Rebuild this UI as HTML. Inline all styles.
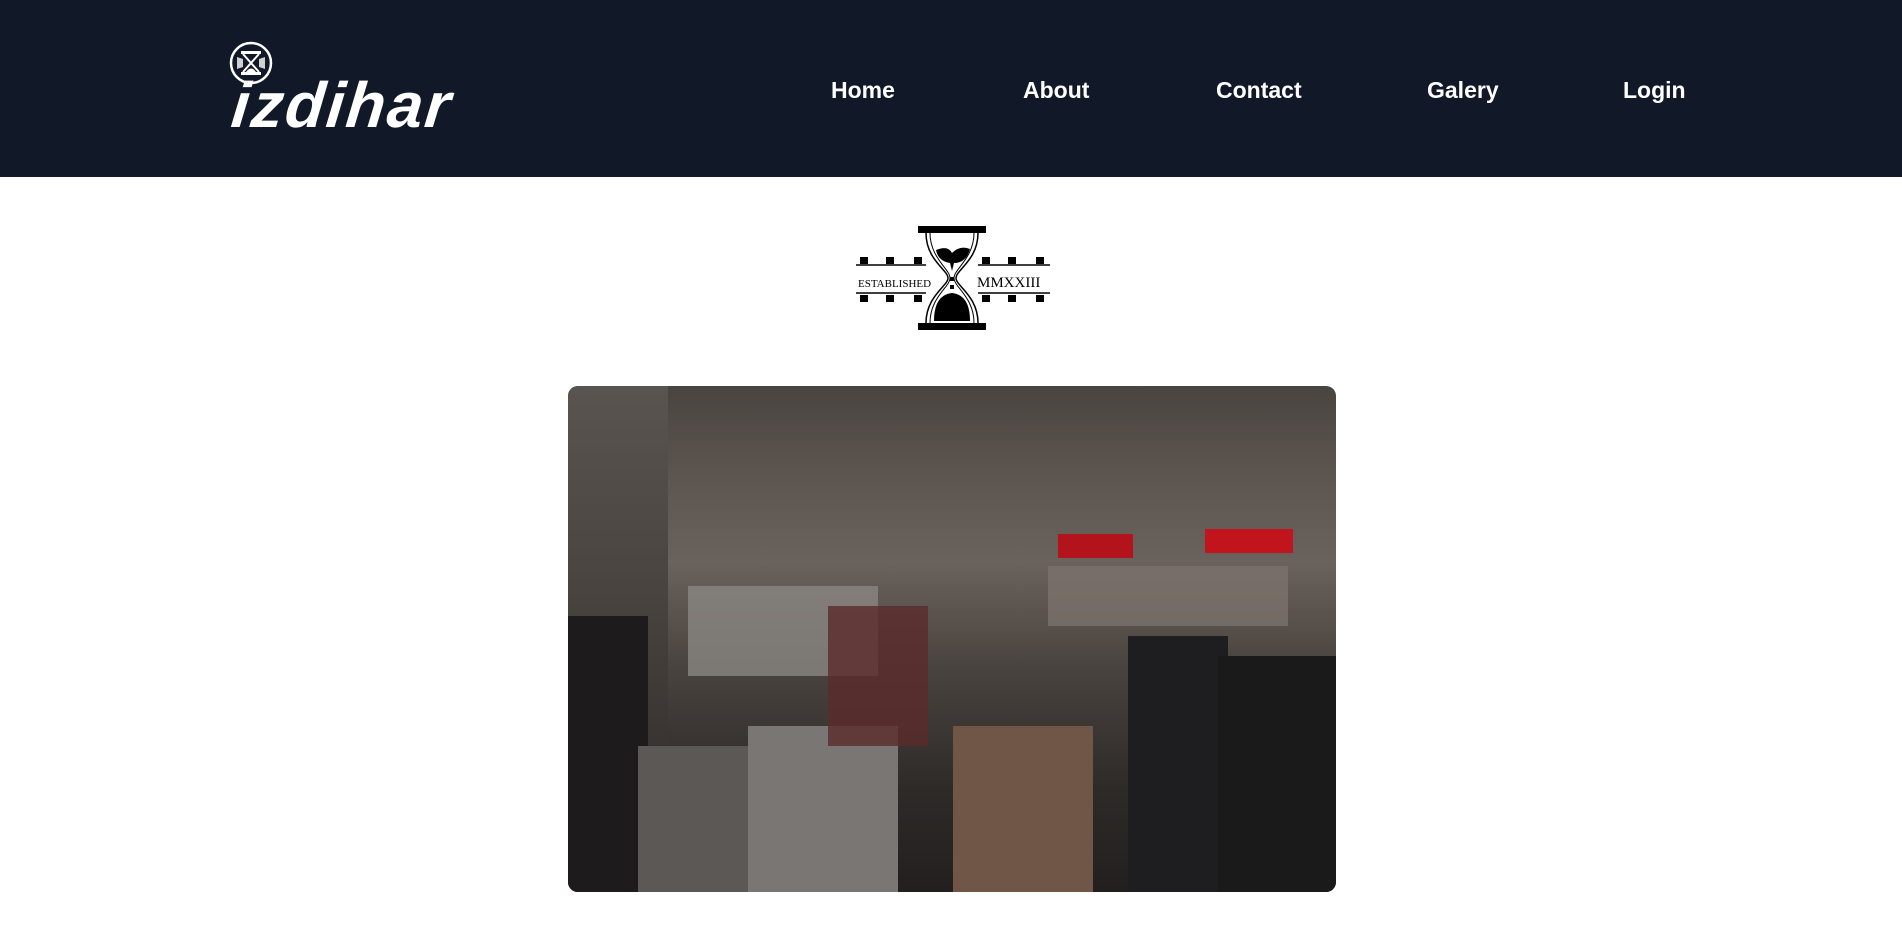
<!DOCTYPE html>
<html><head><meta charset="utf-8"><style>
*{margin:0;padding:0;box-sizing:border-box}
body{width:1902px;height:925px;background:#fff;font-family:"Liberation Sans",sans-serif;overflow:hidden;position:relative}
header{position:absolute;left:0;top:0;width:1902px;height:177px;background:#111827}
.nav a{position:absolute;top:77px;color:#fff;font-size:23px;font-weight:bold;text-decoration:none}
.logo{position:absolute;left:232px;top:68px;color:#fff;font-size:64px;font-weight:bold;font-style:italic;letter-spacing:2px;transform:skewX(-6deg)}
.photo{position:absolute;left:568px;top:386px;width:768px;height:506px;border-radius:10px;overflow:hidden;
background:linear-gradient(180deg,#4a4440 0%,#5e5752 20%,#6a625c 35%,#4a4440 55%,#2e2a28 80%,#221f1e 100%)}
.photo div{position:absolute}
</style></head><body>
<header>
<svg style="position:absolute;left:229px;top:41px" width="44" height="44" viewBox="0 0 44 44">
<circle cx="22" cy="22" r="20" fill="none" stroke="#fff" stroke-width="2.5"/>
<rect x="12" y="10" width="20" height="3" fill="#fff"/><rect x="12" y="31" width="20" height="3" fill="#fff"/>
<path d="M14 13 L22 22 L14 31 M30 13 L22 22 L30 31" stroke="#fff" stroke-width="2" fill="none"/>
<path d="M8 16 L14 18 L14 26 L8 28Z M36 16 L30 18 L30 26 L36 28Z" fill="#fff" opacity=".8"/>
<path d="M17 31 Q22 24 27 31Z" fill="#fff"/>
</svg>
<div class="logo">izdihar</div>
<nav class="nav">
<a style="left:831px">Home</a><a style="left:1023px">About</a><a style="left:1216px">Contact</a><a style="left:1427px">Galery</a><a style="left:1623px">Login</a>
</nav>
</header>
<svg style="position:absolute;left:856px;top:225px" width="194" height="108" viewBox="0 0 194 108">
<rect x="62" y="1" width="68" height="7" fill="#000"/><rect x="62" y="98" width="68" height="7" fill="#000"/>
<line x1="0" y1="40" x2="194" y2="40" stroke="#000" stroke-width="1.5"/>
<line x1="0" y1="68" x2="194" y2="68" stroke="#000" stroke-width="1.5"/>
<g fill="#000">
<rect x="4" y="32" width="8" height="7"/><rect x="30" y="32" width="8" height="7"/><rect x="58" y="32" width="8" height="7"/>
<rect x="126" y="32" width="8" height="7"/><rect x="152" y="32" width="8" height="7"/><rect x="180" y="32" width="8" height="7"/>
<rect x="4" y="70" width="8" height="7"/><rect x="30" y="70" width="8" height="7"/><rect x="58" y="70" width="8" height="7"/>
<rect x="126" y="70" width="8" height="7"/><rect x="152" y="70" width="8" height="7"/><rect x="180" y="70" width="8" height="7"/>
</g>
<rect x="70" y="8" width="52" height="90" fill="#fff"/>
<path d="M70 8 C70 35 92 45 92 53 C92 61 70 71 70 98 M122 8 C122 35 100 45 100 53 C100 61 122 71 122 98" stroke="#000" stroke-width="1.5" fill="none"/>
<path d="M74 8 C74 33 94 44 94 53 C94 62 74 72 74 98 M118 8 C118 33 98 44 98 53 C98 62 118 72 118 98" stroke="#000" stroke-width="1" fill="none"/>
<path d="M80 25 Q92 20 96 28 Q104 20 114 24 Q110 38 98 38 L96 46 L94 38 Q82 36 80 25Z" fill="#000"/>
<rect x="94" y="52" width="4" height="4"/><rect x="94" y="60" width="4" height="4"/>
<path d="M78 96 Q78 70 96 68 Q114 70 114 96Z" fill="#000"/>
<text x="2" y="62" font-family="Liberation Serif,serif" font-size="11">ESTABLISHED</text>
<text x="121" y="62" font-family="Liberation Serif,serif" font-size="15">MMXXIII</text>
</svg>
<div class="photo">
<div style="left:0;top:0;width:100px;height:506px;background:linear-gradient(180deg,#5a5450,#4a4440 40%,#2a2624)"></div>
<div style="left:490px;top:148px;width:75px;height:24px;background:#b3141c"></div>
<div style="left:637px;top:143px;width:88px;height:24px;background:#c2141c"></div>
<div style="left:120px;top:200px;width:190px;height:90px;background:#8a8682;opacity:.8"></div>
<div style="left:480px;top:180px;width:240px;height:60px;background:#7a726c;opacity:.8"></div>
<div style="left:0;top:230px;width:80px;height:276px;background:#1d1b1b"></div>
<div style="left:70px;top:360px;width:110px;height:146px;background:#5b5856"></div>
<div style="left:180px;top:340px;width:150px;height:166px;background:#7a7674"></div>
<div style="left:260px;top:220px;width:100px;height:140px;background:#5a2a2a;opacity:.8"></div>
<div style="left:385px;top:340px;width:140px;height:166px;background:#6f5646"></div>
<div style="left:560px;top:250px;width:100px;height:256px;background:#1e1e20"></div>
<div style="left:650px;top:270px;width:118px;height:236px;background:#1a1a1b"></div>
</div>
</body></html>
